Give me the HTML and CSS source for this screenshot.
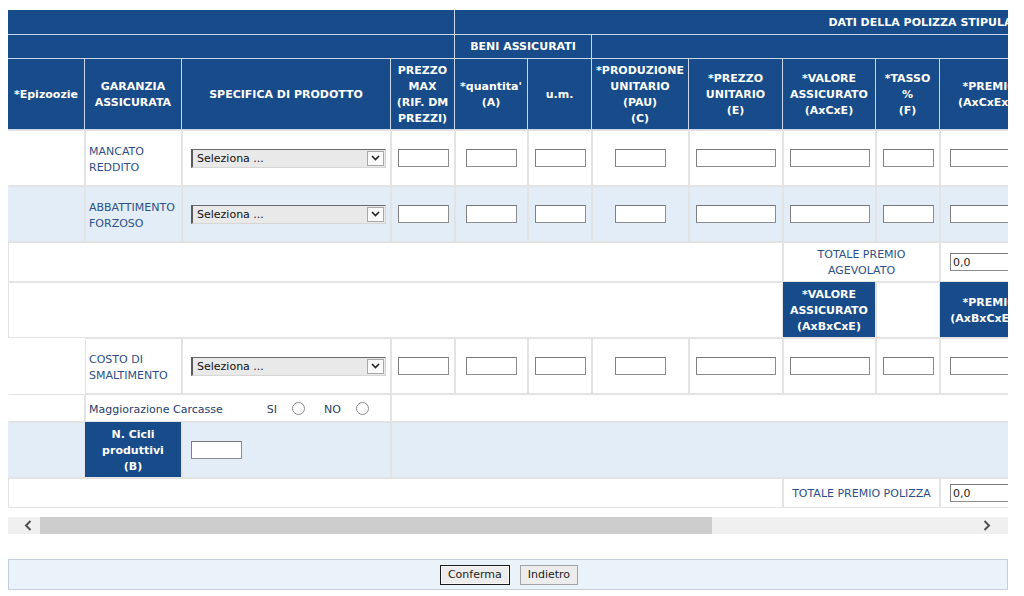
FILE: index.html
```html
<!DOCTYPE html>
<html lang="it">
<head>
<meta charset="utf-8">
<title>Dati della polizza stipulata</title>
<link rel="stylesheet" href="styles.css">
</head>
<body>
<div class="page">
  <div class="viewport">
    <table class="grid">
      <colgroup>
        <col class="w77"><col class="w97"><col class="w209"><col class="w64"><col class="w73"><col class="w64"><col class="w97"><col class="w94"><col class="w93"><col class="w64"><col class="w100"><col class="w120"><col class="w120"><col class="w121">
      </colgroup>
      <thead>
        <tr class="h1">
          <th colspan="4"></th>
          <th colspan="10">DATI DELLA POLIZZA STIPULATA</th>
        </tr>
        <tr class="h2">
          <th colspan="4"></th>
          <th colspan="2">BENI ASSICURATI</th>
          <th colspan="8"></th>
        </tr>
        <tr class="h3">
          <th>*Epizoozie</th>
          <th>GARANZIA<br>ASSICURATA</th>
          <th>SPECIFICA DI PRODOTTO</th>
          <th>PREZZO<br>MAX<br>(RIF. DM<br>PREZZI)</th>
          <th>*quantita'<br>(A)</th>
          <th>u.m.</th>
          <th>*PRODUZIONE<br>UNITARIO<br>(PAU)<br>(C)</th>
          <th>*PREZZO<br>UNITARIO<br>(E)</th>
          <th>*VALORE<br>ASSICURATO<br>(AxCxE)</th>
          <th>*TASSO<br>%<br>(F)</th>
          <th>*PREMIO<br>(AxCxExF)</th>
          <th></th>
          <th></th>
          <th></th>
        </tr>
      </thead>
      <tbody>
        <tr class="r56">
          <td class="ep"></td>
          <td class="lbl">MANCATO<br>REDDITO</td>
          <td class="ctr"><span class="selwrap"><select class="sel"><option>Seleziona ...</option></select><span class="selarrow"><svg width="9" height="6" viewBox="0 0 9 6"><path d="M1 1 L4.5 4.5 L8 1" fill="none" stroke="#222" stroke-width="1.6"/></svg></span></span></td>
          <td class="ctr"><input class="in" type="text"></td>
          <td class="ctr"><input class="in" type="text"></td>
          <td class="ctr"><input class="in" type="text"></td>
          <td class="ctr"><input class="in" type="text"></td>
          <td class="ctr"><input class="in wide" type="text"></td>
          <td class="ctr"><input class="in wide" type="text"></td>
          <td class="ctr"><input class="in" type="text"></td>
          <td class="ctr"><input class="in wide" type="text"></td>
          <td></td><td></td><td></td>
        </tr>
        <tr class="r56 alt">
          <td class="ep"></td>
          <td class="lbl">ABBATTIMENTO<br>FORZOSO</td>
          <td class="ctr"><span class="selwrap"><select class="sel"><option>Seleziona ...</option></select><span class="selarrow"><svg width="9" height="6" viewBox="0 0 9 6"><path d="M1 1 L4.5 4.5 L8 1" fill="none" stroke="#222" stroke-width="1.6"/></svg></span></span></td>
          <td class="ctr"><input class="in" type="text"></td>
          <td class="ctr"><input class="in" type="text"></td>
          <td class="ctr"><input class="in" type="text"></td>
          <td class="ctr"><input class="in" type="text"></td>
          <td class="ctr"><input class="in wide" type="text"></td>
          <td class="ctr"><input class="in wide" type="text"></td>
          <td class="ctr"><input class="in" type="text"></td>
          <td class="ctr"><input class="in wide" type="text"></td>
          <td></td><td></td><td></td>
        </tr>
        <tr class="r40">
          <td colspan="8"></td>
          <td colspan="2" class="tot">TOTALE PREMIO<br>AGEVOLATO</td>
          <td class="ctr"><input class="in wide" type="text" value="0,0"></td>
          <td></td><td></td><td></td>
        </tr>
        <tr class="r56">
          <td colspan="8"></td>
          <th class="lowered">*VALORE<br>ASSICURATO<br>(AxBxCxE)</th>
          <td></td>
          <th class="lowered">*PREMIO<br>(AxBxCxExF)</th>
          <td></td><td></td><td></td>
        </tr>
        <tr class="r56">
          <td class="ep blank"></td>
          <td class="lbl">COSTO DI<br>SMALTIMENTO</td>
          <td class="ctr"><span class="selwrap"><select class="sel"><option>Seleziona ...</option></select><span class="selarrow"><svg width="9" height="6" viewBox="0 0 9 6"><path d="M1 1 L4.5 4.5 L8 1" fill="none" stroke="#222" stroke-width="1.6"/></svg></span></span></td>
          <td class="ctr"><input class="in" type="text"></td>
          <td class="ctr"><input class="in" type="text"></td>
          <td class="ctr"><input class="in" type="text"></td>
          <td class="ctr"><input class="in" type="text"></td>
          <td class="ctr"><input class="in wide" type="text"></td>
          <td class="ctr"><input class="in wide" type="text"></td>
          <td class="ctr"><input class="in" type="text"></td>
          <td class="ctr"><input class="in wide" type="text"></td>
          <td></td><td></td><td></td>
        </tr>
        <tr class="r28">
          <td class="ep"></td>
          <td colspan="2" class="lbl small">Maggiorazione Carcasse<span class="opt">SI</span><input class="radio" type="radio" name="mc"><span class="opt no">NO</span><input class="radio" type="radio" name="mc"></td>
          <td colspan="11"></td>
        </tr>
        <tr class="r56 alt">
          <td class="ep"></td>
          <th class="lowered">N. Cicli<br>produttivi<br>(B)</th>
          <td class="left"><input class="in" type="text"></td>
          <td colspan="11"></td>
        </tr>
        <tr class="r30">
          <td colspan="8"></td>
          <td colspan="2" class="tot">TOTALE PREMIO POLIZZA</td>
          <td class="ctr"><input class="in wide" type="text" value="0,0"></td>
          <td></td><td></td><td></td>
        </tr>
      </tbody>
    </table>
  </div>
  <div class="hscroll">
    <span class="sb-btn sb-left"><svg width="8" height="11" viewBox="0 0 8 11"><path d="M6.5 1 L2 5.5 L6.5 10" fill="none" stroke="#505050" stroke-width="2"/></svg></span>
    <span class="sb-thumb"></span>
    <span class="sb-track"></span>
    <span class="sb-btn sb-right"><svg width="8" height="11" viewBox="0 0 8 11"><path d="M1.5 1 L6 5.5 L1.5 10" fill="none" stroke="#505050" stroke-width="2"/></svg></span>
  </div>
  <div class="actions">
    <button class="btn default" type="button">Conferma</button>
    <button class="btn" type="button">Indietro</button>
  </div>
</div>
</body>
</html>
```
FILE: styles.css
```css
* { box-sizing: border-box; }
html, body { margin: 0; padding: 0; background: #fff; }
body {
  font-family: "DejaVu Sans", Verdana, sans-serif;
  font-size: 11px;
  color: #2d5089;
}
.page { padding: 10px 16px 0 8px; width: 1024px; }
.viewport { width: 1000px; overflow: hidden; }

.grid {
  border-collapse: separate;
  border-spacing: 0;
  table-layout: fixed;
  width: 1393px;
}
.w77 { width: 77px; } .w97 { width: 97px; } .w209 { width: 209px; }
.w64 { width: 64px; } .w73 { width: 73px; } .w94 { width: 94px; }
.w93 { width: 93px; } .w100 { width: 100px; } .w120 { width: 120px; }
.w121 { width: 121px; }

.grid th {
  background: #174b89;
  color: #fff;
  font-weight: bold;
  text-align: center;
  vertical-align: middle;
  line-height: 16px;
  padding: 1px 1px 0;
  border: 0;
  border-right: 1px solid #c9d7e8;
  border-bottom: 1px solid #c9d7e8;
  white-space: nowrap;
}
.grid th.lowered { padding-top: 3px; }
.grid td {
  border: 1px solid #e3e3e3;
  vertical-align: middle;
  line-height: 16px;
  padding: 0 3px;
  background: #fff;
}
.grid td.lbl { padding-top: 3px; }
.grid td.tot { padding-top: 2px; }
.grid tbody th { border-right: 1px solid #e3e3e3; border-bottom: 1px solid #e3e3e3; }
.h1 { height: 25px; }
.h2 { height: 24px; }
.h3 { height: 71px; }
.r56 { height: 56px; }
.r40 { height: 40px; }
.r28 { height: 28px; }
.r30 { height: 30px; }
.grid .alt td { background: #e3edf7; }
.grid td.ep { border-left-color: #fff; }
.grid .alt td.ep { border-left-color: #e3edf7; }
.grid td.blank { border-color: #fff; }
.grid td.ctr { text-align: center; }
.grid td.left { padding-left: 8px; }
.grid td.tot { text-align: center; }
.grid td.small { white-space: nowrap; color: #24406f; }

.in {
  width: 51px;
  height: 18px;
  border: 1px solid #8d8d8d;
  border-top-color: #777;
  border-left-color: #808080;
  background: #fff;
  font-family: "DejaVu Sans", Verdana, sans-serif;
  font-size: 11px;
  color: #222;
  padding: 0 2px;
  margin: 0;
  vertical-align: middle;
}
.in.wide { width: 80px; }

.selwrap {
  position: relative;
  display: inline-block;
  vertical-align: middle;
  margin-left: 4px;
}
.sel {
  -webkit-appearance: none;
  appearance: none;
  width: 195px;
  height: 19px;
  margin: 0;
  padding: 0 0 0 4px;
  border-style: solid;
  border-width: 1px 1px 1px 2px;
  border-color: #6a6a6a #d6d6d6 #d6d6d6 #5a5a5a;
  border-radius: 0;
  background: #e9e9e9;
  font-family: "DejaVu Sans", Verdana, sans-serif;
  font-size: 11px;
  color: #111;
  display: block;
}
.selarrow {
  position: absolute;
  right: 2px;
  top: 2px;
  width: 17px;
  height: 15px;
  background: #fbfbfb;
  border: 1px solid #a8a8a8;
  display: flex;
  align-items: center;
  justify-content: center;
}

.opt { color: #2d3f60; margin-left: 44px; }
.opt.no { margin-left: 19px; }
.radio {
  -webkit-appearance: none;
  appearance: none;
  width: 13px;
  height: 13px;
  border: 1px solid #8a8a8a;
  border-radius: 50%;
  background: #fff;
  margin: 0 0 0 15px;
  vertical-align: -2px;
}

.hscroll {
  width: 1000px;
  height: 17px;
  margin-top: 9px;
  background: #f0f0f0;
  display: flex;
}
.sb-btn { width: 32px; height: 17px; display: flex; align-items: center; }
.sb-left { padding-left: 16px; }
.sb-right { padding-left: 7px; }
.sb-thumb { width: 672px; height: 17px; background: #cdcdcd; }
.sb-track { flex: 1; }

.actions {
  width: 1000px;
  height: 31px;
  margin-top: 25px;
  background: #eaf2fa;
  border: 1px solid #c4cfdb;
  display: flex;
  align-items: center;
  justify-content: center;
  gap: 10px;
  padding-left: 2px;
}
.btn {
  height: 20px;
  padding: 0 7px;
  font-family: "DejaVu Sans", Verdana, sans-serif;
  font-size: 11px;
  color: #222;
  background: #ececec;
  border: 1px solid #a3a3a3;
  border-radius: 0;
  margin: 0;
}
.btn.default { border: 1px solid #1b1b1b; box-shadow: inset 0 0 0 1px #f8f8f8; }
```
